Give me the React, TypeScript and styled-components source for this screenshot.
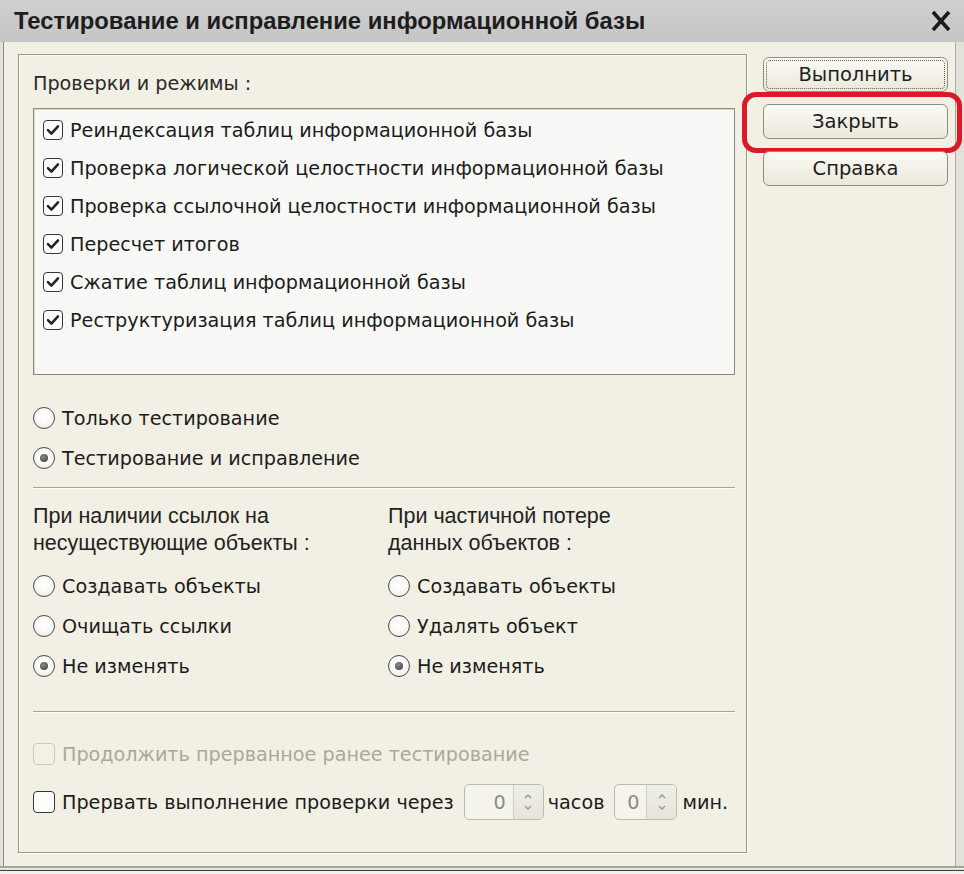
import React from 'react';
import styled, { createGlobalStyle, css } from 'styled-components';

const GlobalStyle = createGlobalStyle`
  html, body { margin: 0; padding: 0; background: #e4e3dc; }
  body { font-family: "DejaVu Sans", "Liberation Sans", sans-serif; }
  * { box-sizing: border-box; }
`;

const Window = styled.div`
  position: relative;
  width: 964px;
  height: 874px;
  display: flex;
  flex-direction: column;
  overflow: hidden;
  background: #e2e1da;
`;

const TitleBar = styled.div`
  flex: none;
  height: 42px;
  background: linear-gradient(#d0d0d0, #c5c5c5);
  display: flex;
  align-items: center;
  justify-content: space-between;
  padding: 0 12px 0 14px;
`;

const Title = styled.div`
  font-family: "Liberation Sans", Arial, sans-serif;
  font-size: 23.8px;
  font-weight: 700;
  color: #1d1d1d;
  white-space: nowrap;
`;

const Body = styled.div`
  flex: none;
  height: 824px;
  width: 953px;
  margin-left: 3px;
  background: #f2f0e4;
  border-left: 1px solid #8c8c8c;
  border-right: 1px solid #a9a9a4;
  display: flex;
  gap: 16px;
  padding: 12px 0 0 14px;
`;

const GroupBox = styled.div`
  flex: none;
  width: 729px;
  height: 799px;
  border: 1px solid #9a9986;
  box-shadow: inset 1px 1px 0 #fbfaf4, 1px 1px 0 #fbfaf4;
  padding: 16px 11px 0 14px;
  display: flex;
  flex-direction: column;
`;

const SectionLabel = styled.div`
  font-size: 19.2px;
  line-height: 26px;
  color: #2a2a2a;
  white-space: nowrap;
`;

const ListBox = styled.div`
  margin-top: 11px;
  height: 267px;
  background: #f8f8f6;
  border: 1px solid #8e8d7c;
  box-shadow: inset 1px 1px 0 #d8d7cc;
  padding: 2px 0 0 9px;
  display: flex;
  flex-direction: column;
`;

const Row = styled.div<{ $h: number; $mt?: number; $gap?: number }>`
  display: flex;
  align-items: center;
  height: ${(p) => p.$h}px;
  margin-top: ${(p) => p.$mt ?? 0}px;
  gap: ${(p) => p.$gap ?? 7}px;
  white-space: nowrap;
`;

const ItemText = styled.span<{ $disabled?: boolean }>`
  font-size: 19.2px;
  color: ${(p) => (p.$disabled ? '#aba897' : '#1c1c1c')};
`;

const Box = styled.span<{ $size: number; $disabled?: boolean }>`
  flex: none;
  width: ${(p) => p.$size}px;
  height: ${(p) => p.$size}px;
  border: 1.6px solid ${(p) => (p.$disabled ? '#c9c7b9' : '#353535')};
  border-radius: 4px;
  background: ${(p) => (p.$disabled ? '#f3f1e6' : '#fdfdfc')};
  display: flex;
  align-items: center;
  justify-content: center;
`;

const RadioCircle = styled.span<{ $on?: boolean }>`
  flex: none;
  width: 22px;
  height: 22px;
  border-radius: 50%;
  border: 1.5px solid #474747;
  background: radial-gradient(circle at 50% 40%, #ffffff, #f1f0ea);
  display: flex;
  align-items: center;
  justify-content: center;
  ${(p) =>
    p.$on &&
    css`
      &::after {
        content: '';
        width: 8px;
        height: 8px;
        border-radius: 50%;
        background: radial-gradient(circle at 40% 35%, #8a8a8a, #3a3a3a);
      }
    `}
`;

const Separator = styled.div<{ $mt: number }>`
  margin-top: ${(p) => p.$mt}px;
  height: 2px;
  border-top: 1px solid #a7a592;
  border-bottom: 1px solid #fdfcf6;
  flex: none;
`;

const Columns = styled.div`
  margin-top: 14px;
  display: grid;
  grid-template-columns: 355px 1fr;
`;

const Column = styled.div`
  display: flex;
  flex-direction: column;
`;

const ColumnLabel = styled.div`
  font-family: "Liberation Sans", Arial, sans-serif;
  font-size: 21.5px;
  line-height: 27px;
  color: #222;
  margin-bottom: 9px;
`;

const Spin = styled.div<{ $w: number; $ml: number }>`
  flex: none;
  width: ${(p) => p.$w}px;
  height: 36px;
  margin-left: ${(p) => p.$ml}px;
  border: 1px solid #bdbbae;
  border-radius: 5px;
  background: #f5f4ec;
  display: flex;
  overflow: hidden;
`;

const SpinValue = styled.div`
  flex: 1;
  display: flex;
  align-items: center;
  justify-content: flex-end;
  padding-right: 7px;
  font-size: 19.2px;
  color: #8d8b80;
`;

const SpinArrows = styled.div`
  flex: none;
  width: 30px;
  border-left: 1px solid #cfcdc1;
  background: linear-gradient(#f0efe7, #e6e4d9);
  display: flex;
  align-items: center;
  justify-content: center;
`;

const UnitText = styled.span<{ $ml: number }>`
  font-size: 19.2px;
  color: #1c1c1c;
  margin-left: ${(p) => p.$ml}px;
`;

const Side = styled.div`
  flex: none;
  width: 185px;
  padding-top: 3px;
  display: flex;
  flex-direction: column;
  gap: 12px;
`;

const ButtonWrap = styled.div`
  position: relative;
`;

const Button = styled.button<{ $default?: boolean }>`
  width: 185px;
  height: 35px;
  border: 1px solid #8f8d7e;
  border-radius: 6px;
  background: linear-gradient(#fbfaf5, #ebe8da);
  font-family: "DejaVu Sans", "Liberation Sans", sans-serif;
  font-size: 19.5px;
  color: #1e1e1e;
  padding: 0;
  position: relative;
  ${(p) =>
    p.$default &&
    css`
      &::after {
        content: '';
        position: absolute;
        inset: 2px;
        border: 1px dotted #5a5a50;
        border-radius: 4px;
      }
    `}
`;

const Highlight = styled.div`
  position: absolute;
  left: -21px;
  right: -14px;
  top: -12px;
  bottom: -14px;
  border: 5px solid #dc1a27;
  border-radius: 14px;
  pointer-events: none;
`;

const Footer = styled.div`
  flex: 1;
  border-top: 2px solid #a3a3a0;
  background: linear-gradient(#e6e6e3 0, #e6e6e3 2px, #3c3c3c 2px, #3c3c3c 3px, #f0f0f0 3px);
`;

const Check = () => (
  <svg width="14" height="12" viewBox="0 0 14 12">
    <path d="M2 6.2 L5.4 9.6 L12 2.4" fill="none" stroke="#222" strokeWidth="2.5" strokeLinecap="round" strokeLinejoin="round" />
  </svg>
);

const Arrows = () => (
  <svg width="12" height="22" viewBox="0 0 12 22">
    <path d="M3 7 L6 4 L9 7" fill="none" stroke="#9a988c" strokeWidth="1.4" />
    <path d="M3 15 L6 18 L9 15" fill="none" stroke="#9a988c" strokeWidth="1.4" />
  </svg>
);

const CloseIcon = () => (
  <svg width="22" height="22" viewBox="0 0 22 22">
    <path d="M3 2 L19 20 M19 2 L3 20" stroke="#1a1a1a" strokeWidth="3.6" strokeLinecap="butt" />
  </svg>
);

const checks = [
  'Реиндексация таблиц информационной базы',
  'Проверка логической целостности информационной базы',
  'Проверка ссылочной целостности информационной базы',
  'Пересчет итогов',
  'Сжатие таблиц информационной базы',
  'Реструктуризация таблиц информационной базы',
];

const Radio = ({ label, on, mt }: { label: string; on?: boolean; mt?: number }) => (
  <Row $h={40} $mt={mt}>
    <RadioCircle $on={on} />
    <ItemText>{label}</ItemText>
  </Row>
);

const Spinner = ({ w, ml }: { w: number; ml: number }) => (
  <Spin $w={w} $ml={ml}>
    <SpinValue>0</SpinValue>
    <SpinArrows>
      <Arrows />
    </SpinArrows>
  </Spin>
);

export default function App() {
  return (
    <>
      <GlobalStyle />
      <Window>
        <TitleBar>
          <Title>Тестирование и исправление информационной базы</Title>
          <CloseIcon />
        </TitleBar>
        <Body>
          <GroupBox>
            <SectionLabel>Проверки и режимы :</SectionLabel>
            <ListBox>
              {checks.map((c) => (
                <Row key={c} $h={38}>
                  <Box $size={20}>
                    <Check />
                  </Box>
                  <ItemText>{c}</ItemText>
                </Row>
              ))}
            </ListBox>
            <Radio label="Только тестирование" mt={23} />
            <Radio label="Тестирование и исправление" on />
            <Separator $mt={9} />
            <Columns>
              <Column>
                <ColumnLabel>
                  При наличии ссылок на
                  <br />
                  несуществующие объекты :
                </ColumnLabel>
                <Radio label="Создавать объекты" />
                <Radio label="Очищать ссылки" />
                <Radio label="Не изменять" on />
              </Column>
              <Column>
                <ColumnLabel>
                  При частичной потере
                  <br />
                  данных объектов :
                </ColumnLabel>
                <Radio label="Создавать объекты" />
                <Radio label="Удалять объект" />
                <Radio label="Не изменять" on />
              </Column>
            </Columns>
            <Separator $mt={25} />
            <Row $h={40} $mt={21}>
              <Box $size={22} $disabled />
              <ItemText $disabled>Продолжить прерванное ранее тестирование</ItemText>
            </Row>
            <Row $h={40} $mt={8} $gap={0}>
              <Box $size={22} />
              <UnitText $ml={7}>Прервать выполнение проверки через</UnitText>
              <Spinner w={80} ml={10} />
              <UnitText $ml={4}>часов</UnitText>
              <Spinner w={63} ml={10} />
              <UnitText $ml={5}>мин.</UnitText>
            </Row>
          </GroupBox>
          <Side>
            <Button $default>Выполнить</Button>
            <ButtonWrap>
              <Button>Закрыть</Button>
              <Highlight />
            </ButtonWrap>
            <Button>Справка</Button>
          </Side>
        </Body>
        <Footer />
      </Window>
    </>
  );
}
